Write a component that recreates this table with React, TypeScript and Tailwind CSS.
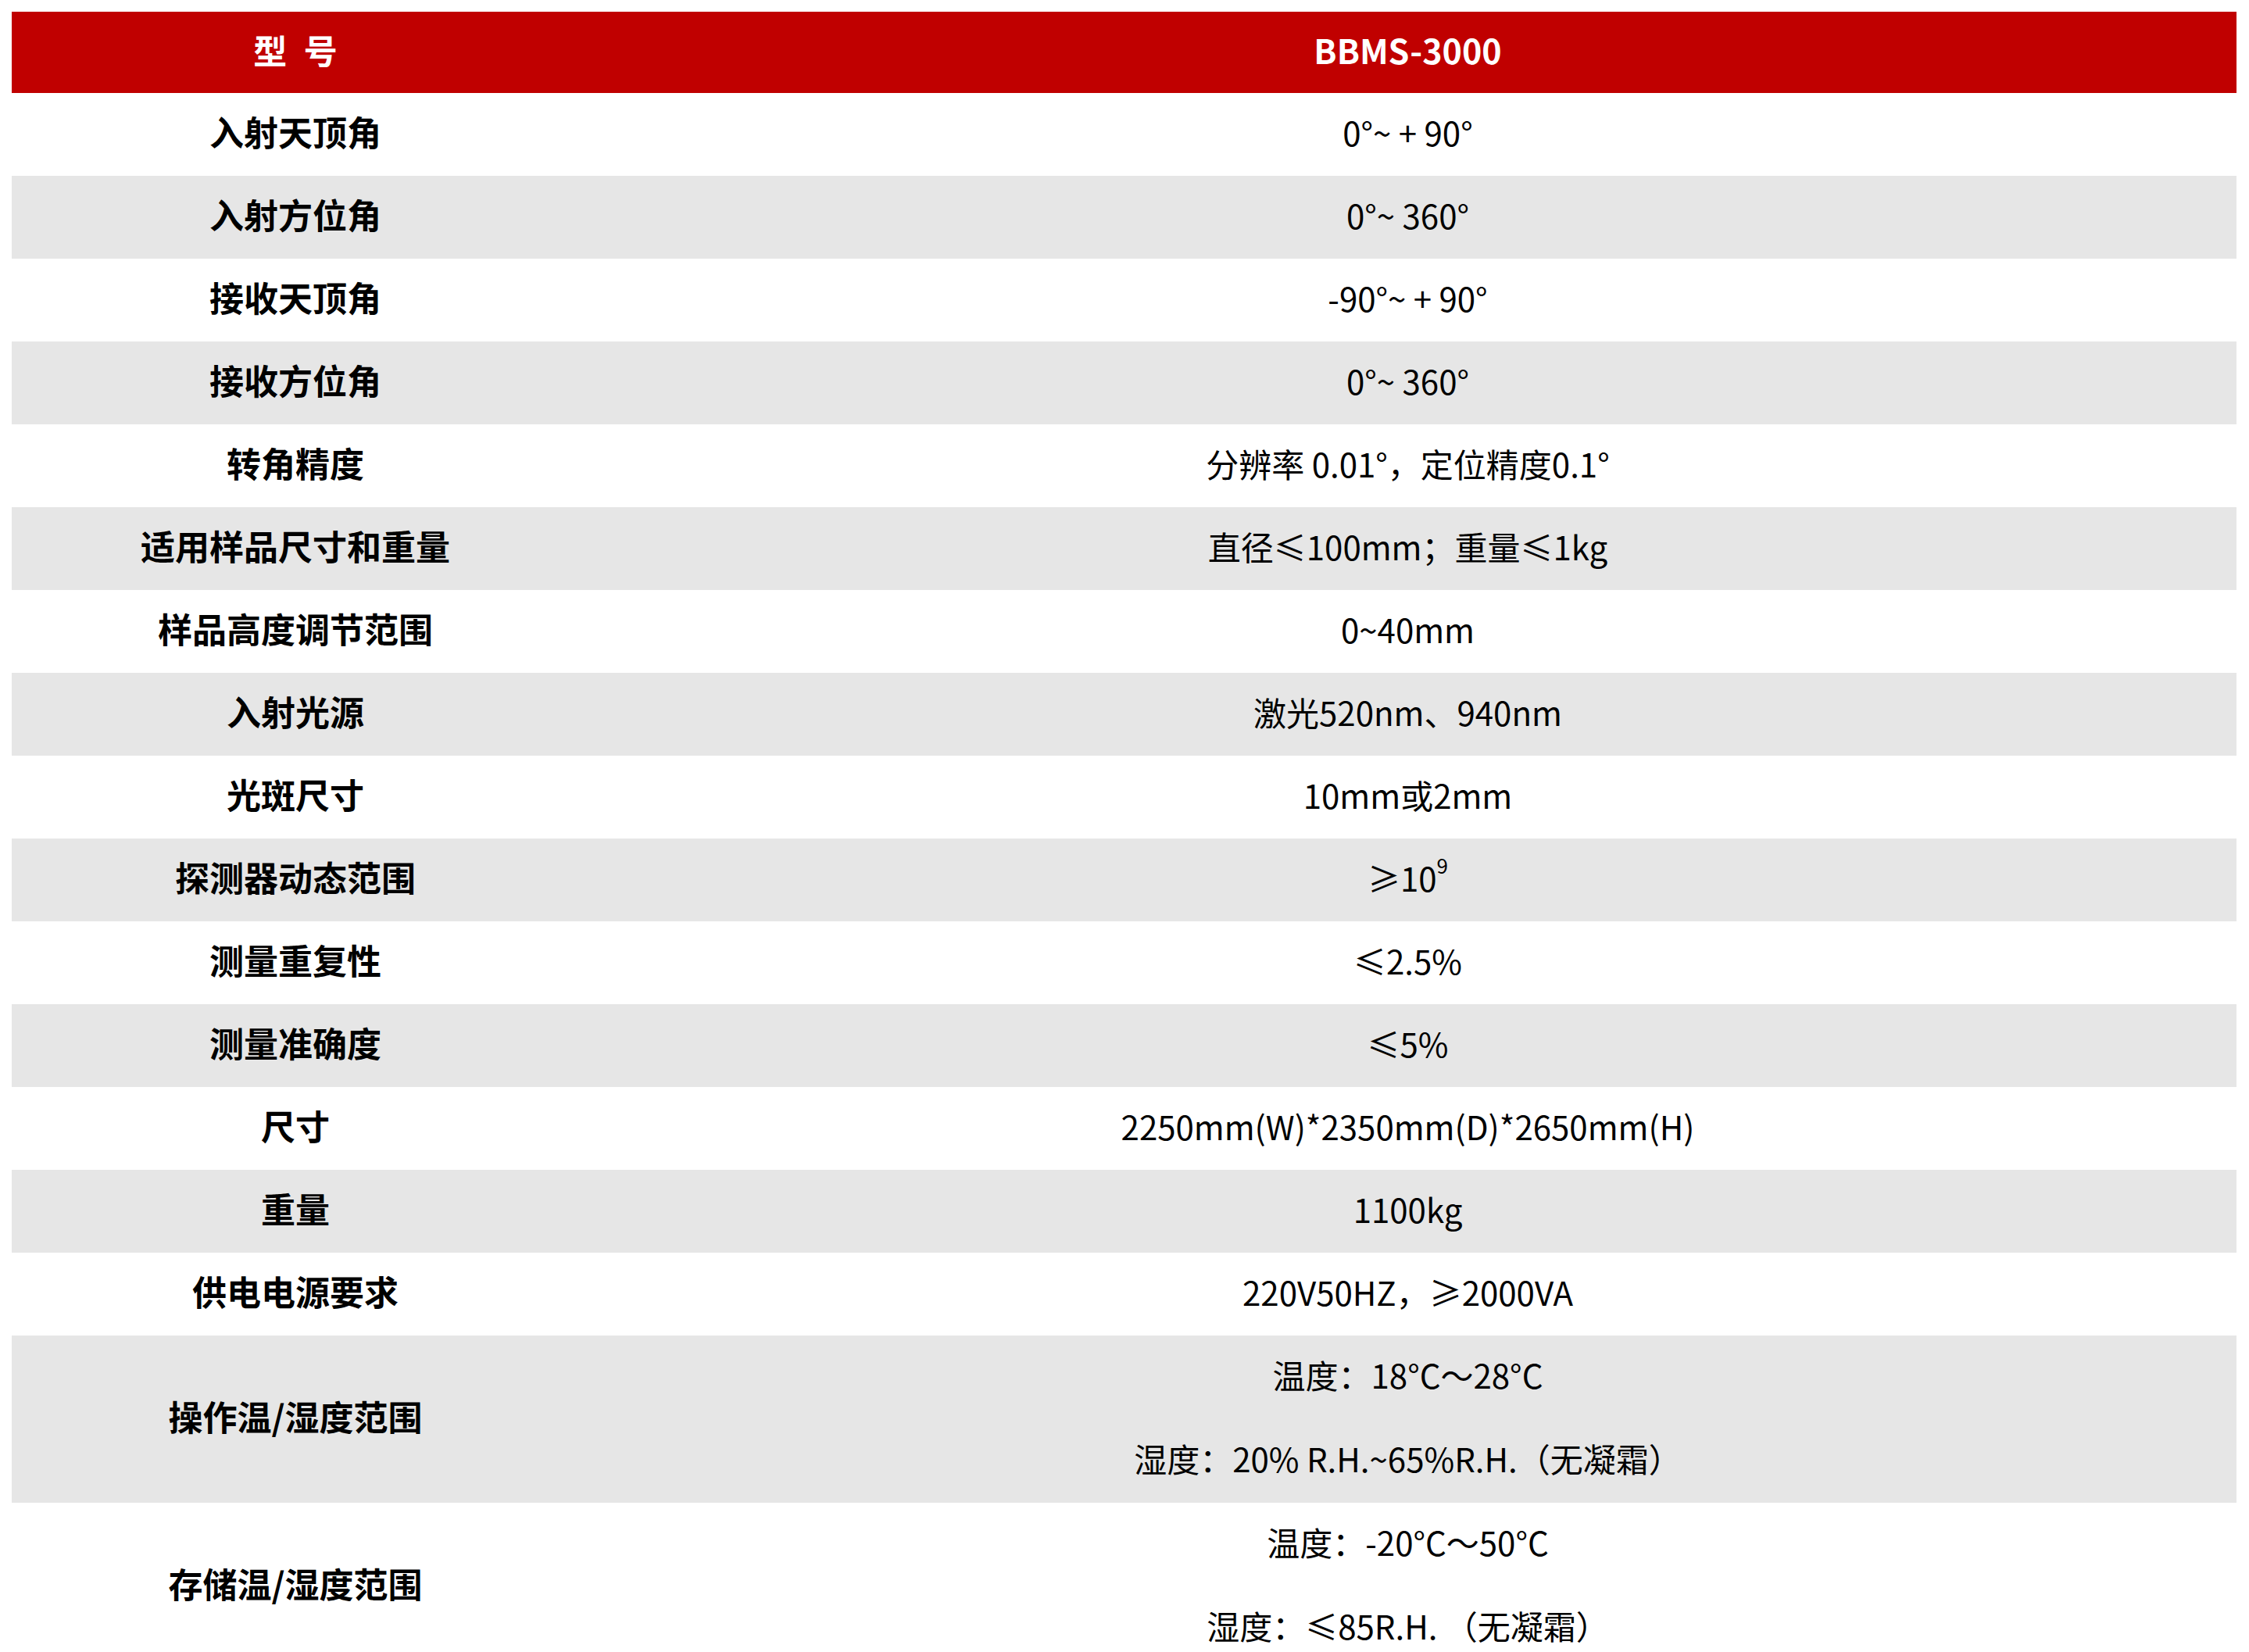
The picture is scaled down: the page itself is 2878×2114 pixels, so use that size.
import React from "react";

type Row = { label: string; values: React.ReactNode[] };

const rows: Row[] = [
  { label: "入射天顶角", values: ["0°~ + 90°"] },
  { label: "入射方位角", values: ["0°~ 360°"] },
  { label: "接收天顶角", values: ["-90°~ + 90°"] },
  { label: "接收方位角", values: ["0°~ 360°"] },
  { label: "转角精度", values: ["分辨率 0.01°，定位精度0.1°"] },
  { label: "适用样品尺寸和重量", values: ["直径≤100mm；重量≤1kg"] },
  { label: "样品高度调节范围", values: ["0~40mm"] },
  { label: "入射光源", values: ["激光520nm、940nm"] },
  { label: "光斑尺寸", values: ["10mm或2mm"] },
  {
    label: "探测器动态范围",
    values: [
      <>
        ≥10<sup className="text-[26px] relative -top-[23px]">9</sup>
      </>,
    ],
  },
  { label: "测量重复性", values: ["≤2.5%"] },
  { label: "测量准确度", values: ["≤5%"] },
  { label: "尺寸", values: ["2250mm(W)*2350mm(D)*2650mm(H)"] },
  { label: "重量", values: ["1100kg"] },
  { label: "供电电源要求", values: ["220V50HZ，≥2000VA"] },
  {
    label: "操作温/湿度范围",
    values: ["温度：18°C～28°C", "湿度：20% R.H.~65%R.H.（无凝霜）"],
  },
  {
    label: "存储温/湿度范围",
    values: ["温度：-20°C～50°C", "湿度：≤85R.H. （无凝霜）"],
  },
];

export default function App() {
  return (
    <div
      lang="zh-CN"
      className="bg-white min-h-screen pt-[15px] pl-[15px] text-black text-[43px]"
      style={{ fontFamily: '"Noto Sans CJK SC", "Noto Sans", sans-serif' }}
    >
      <div className="w-[2847px]">
        <div className="grid grid-cols-[726px_1fr] h-[104px] bg-[#c00000] text-white font-bold">
          <div className="flex items-center justify-center pb-[8px]">型&ensp;号</div>
          <div className="flex items-center justify-center pb-[8px]">BBMS-3000</div>
        </div>
        {rows.map((row, i) => (
          <div
            key={row.label}
            className={`grid grid-cols-[726px_1fr] ${i % 2 === 1 ? "bg-[#e6e6e6]" : "bg-white"}`}
          >
            <div className="flex items-center justify-center font-bold text-[44px] pb-[8px]">
              {row.label}
            </div>
            <div className="flex flex-col text-[42px]">
              {row.values.map((v, j) => (
                <div
                  key={j}
                  className={`flex items-center justify-center pb-[8px] ${row.values.length > 1 ? "h-[107px]" : "h-[106px]"}`}
                >
                  <span>{v}</span>
                </div>
              ))}
            </div>
          </div>
        ))}
      </div>
    </div>
  );
}
